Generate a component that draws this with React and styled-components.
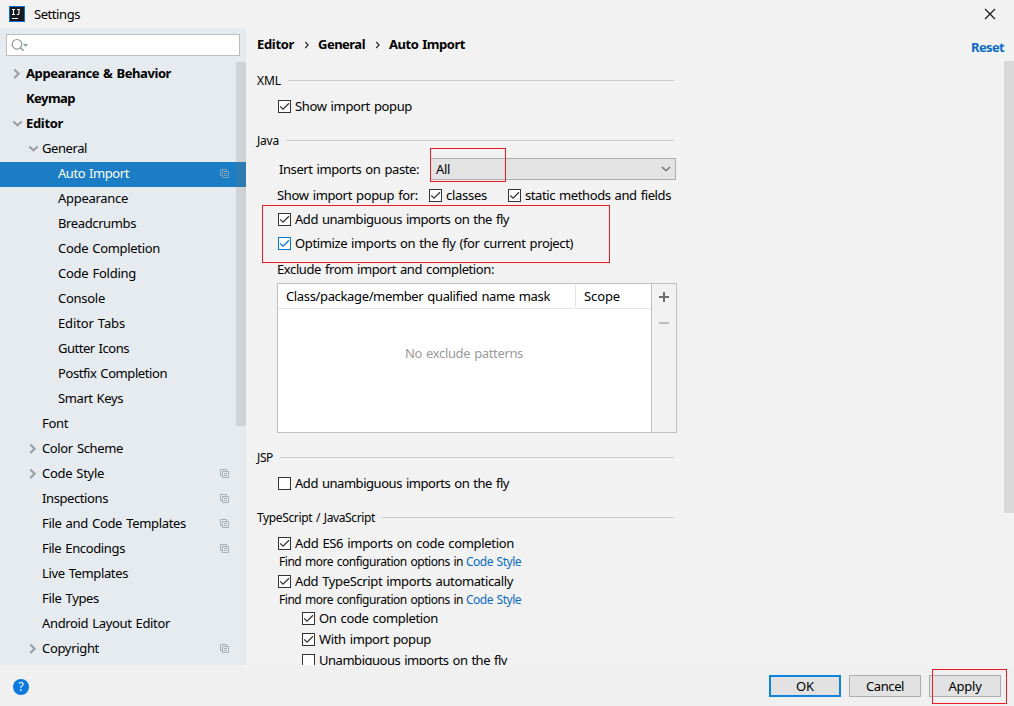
import React, { useLayoutEffect, useRef, useState } from "react";
import styled, { createGlobalStyle, css } from "styled-components";

const Global = createGlobalStyle`
  * { box-sizing: border-box; }
  html, body { margin: 0; padding: 0; overflow: hidden; }
  body {
    font-family: "Noto Sans", "Open Sans", sans-serif;
    font-size: 13px;
    color: #000;
    background: #f2f2f2;
  }
`;

/* Text fitted to a given width by adjusting its tracking. */
const Label = styled.span`
  flex: none;
  display: inline-block;
  white-space: nowrap;
  font-size: ${(p) => p.$size || 13}px;
  font-weight: ${(p) => (p.$bold ? 700 : 400)};
  color: ${(p) => p.$color || "inherit"};
  line-height: 18px;
  word-spacing: 1px;
  margin-bottom: ${(p) => p.$lift || 0}px;
`;

function Text({ w, size, bold, color, lift, children }) {
  const ref = useRef(null);
  const [spacing, setSpacing] = useState(0);
  useLayoutEffect(() => {
    const natural = ref.current.getBoundingClientRect().width;
    setSpacing((w - natural) / children.length);
  }, []);
  return (
    <Label ref={ref} $size={size} $bold={bold} $color={color} $lift={lift} style={{ letterSpacing: spacing }}>
      {children}
    </Label>
  );
}

const Window = styled.div`
  position: relative;
  width: 1014px;
  height: 706px;
  display: flex;
  flex-direction: column;
  background: #f2f2f2;
  overflow: hidden;
`;

const TitleBar = styled.header`
  height: 28px;
  flex: none;
  display: flex;
  align-items: center;
  padding: 0 18px 0 9px;
  gap: 9px;
`;

const Spacer = styled.div`
  flex: 1;
`;

const Body = styled.div`
  height: 637px;
  flex: none;
  display: flex;
`;

const Sidebar = styled.aside`
  width: 246px;
  flex: none;
  background: #e6ebef;
  display: flex;
  flex-direction: column;
`;

const Search = styled.div`
  height: 22px;
  flex: none;
  margin: 6px 6px 6px;
  background: #fff;
  border: 1px solid #bdbdbd;
  padding: 3px 0 0 4px;
  svg { display: block; }
`;

const Tree = styled.div`
  position: relative;
`;

const TreeRow = styled.div`
  height: 25px;
  display: flex;
  align-items: center;
  padding-left: ${(p) => 10 + p.$level * 16}px;
  padding-right: 16px;
  color: ${(p) => (p.$selected ? "#fff" : "#000")};
  background: ${(p) => (p.$selected ? "#1b7dc4" : "transparent")};
  padding-bottom: 1px;
`;

const ArrowSlot = styled.span`
  width: 16px;
  height: 16px;
  flex: none;
  svg { display: block; }
`;

const thumb = css`
  position: absolute;
  right: 0;
  width: 10px;
`;

const TreeThumb = styled.div`
  ${thumb}
  top: 0;
  height: 364px;
  background: rgba(115, 115, 115, 0.2);
`;

const Main = styled.main`
  position: relative;
  flex: 1;
  display: flex;
  flex-direction: column;
  overflow: hidden;
`;

const PaneThumb = styled.div`
  ${thumb}
  top: 33px;
  height: 452px;
  background: #d9d9d9;
`;

const Crumbs = styled.div`
  height: 33px;
  flex: none;
  display: flex;
  align-items: center;
  padding: 0 10px 0 11px;
`;

const CrumbArrow = styled.span`
  width: 24px;
  flex: none;
  display: flex;
  justify-content: center;
  padding-left: 2px;
`;

const ResetSlot = styled.span`
  padding-top: 6px;
`;

const Pane = styled.div`
  padding: 10px 0 0 11px;
  width: 431px;
  display: flex;
  flex-direction: column;
`;

const Heading = styled.div`
  height: 20px;
  flex: none;
  margin-top: ${(p) => p.$mt || 0}px;
  margin-right: 3px;
  display: flex;
  align-items: center;
  gap: 7px;
  &::after {
    content: "";
    flex: 1;
    height: 1px;
    margin-bottom: 1px;
    background: #cacaca;
  }
`;

const Row = styled.div`
  height: ${(p) => p.$h || 21}px;
  flex: none;
  margin-top: ${(p) => p.$mt || 0}px;
  padding-left: ${(p) => p.$indent || 21}px;
  display: flex;
  align-items: center;
`;

const Box = styled.span`
  width: 13px;
  height: 13px;
  flex: none;
  margin-right: 4px;
  border: 1px solid ${(p) => (p.$focus ? "#0078d7" : "#333")};
  color: ${(p) => (p.$focus ? "#0078d7" : "#333")};
  background: #fff;
  svg { display: block; }
`;

const Gap = styled.span`
  width: ${(p) => p.$w}px;
  flex: none;
`;

const Combo = styled.div`
  width: 246px;
  height: 22px;
  flex: none;
  display: flex;
  align-items: center;
  justify-content: space-between;
  padding: 0 4px 0 5px;
  background: #e3e3e3;
  border: 1px solid #adadad;
`;

const Table = styled.div`
  height: 150px;
  width: 400px;
  flex: none;
  margin: 3px 0 0 20px;
  display: flex;
  border: 1px solid #bfbfbf;
`;

const TableMain = styled.div`
  flex: 1;
  background: #fff;
  display: flex;
  flex-direction: column;
`;

const TableHead = styled.div`
  height: 25px;
  display: flex;
  align-items: center;
  border-bottom: 1px solid #e3e3e3;
  padding-left: 8px;
`;

const HeadName = styled.div`
  width: 290px;
  height: 22px;
  display: flex;
  align-items: center;
  border-right: 1px solid #e3e3e3;
  margin-right: 8px;
`;

const TableEmpty = styled.div`
  padding-top: 35px;
  padding-left: 127px;
`;

const TableTools = styled.div`
  width: 25px;
  border-left: 1px solid #bfbfbf;
  background: #f2f2f2;
  svg { display: block; }
`;

const Footer = styled.footer`
  flex: 1;
  display: flex;
  align-items: flex-start;
  padding: 10px 13px 0 13px;
  gap: 8px;
  background: #f0f0f0;
`;

const HelpSlot = styled.span`
  padding-top: 4px;
  svg { display: block; }
`;

const Button = styled.button`
  width: 72px;
  height: 22px;
  padding: 0;
  display: flex;
  align-items: center;
  justify-content: center;
  font-family: inherit;
  color: #000;
  background: #e2e2e2;
  border: ${(p) => (p.$primary ? "2px solid #0d83dc" : "1px solid #adadad")};
  border-radius: 0;
`;

const Mark = styled.div`
  position: absolute;
  left: ${(p) => p.$x}px;
  top: ${(p) => p.$y}px;
  width: ${(p) => p.$w}px;
  height: ${(p) => p.$h}px;
  border: 1px solid #ed1c24;
  pointer-events: none;
`;

const Logo = () => (
  <svg width="16" height="16" viewBox="0 0 16 16">
    <rect width="16" height="16" fill="#0a6fd6" />
    <rect x="1" y="1" width="14" height="14" fill="#16191d" />
    <path d="M3 3.5h3M4.5 3.5v5M3 8.5h3M8 3.5h3M10 3.5V7.2Q10 8.5 8.8 8.5H7.8" stroke="#fff" strokeWidth="1.1" fill="none" />
    <rect x="3" y="12" width="6" height="1" fill="#fff" />
  </svg>
);

const CloseIcon = () => (
  <svg width="12" height="12" viewBox="0 0 12 12">
    <path d="M1 1l10 10M11 1L1 11" stroke="#111" strokeWidth="1.1" />
  </svg>
);

const SearchIcon = () => (
  <svg width="20" height="15" viewBox="0 0 20 15">
    <circle cx="6" cy="6.3" r="4.8" stroke="#8b979f" strokeWidth="1.2" fill="none" />
    <path d="M9.5 9.8l3 3" stroke="#8b979f" strokeWidth="1.6" />
    <path d="M12 6h5l-2.5 2.7z" fill="#8b979f" />
  </svg>
);

const Arrow = ({ open }) => (
  <svg width="16" height="16" viewBox="0 0 16 16">
    <path d={open ? "M3.3 5.4L7.5 9.3l4.2-3.9" : "M4.4 3.5L8.6 7.7l-4.2 4.2"} stroke="#9a9ea2" strokeWidth="2.1" fill="none" />
  </svg>
);

const CopyIcon = ({ color }) => (
  <svg width="10" height="10" viewBox="0 0 10 10" fill="none" stroke={color}>
    <path d="M2 6.5H.5v-6h6V2M2.5 2.5h6v6h-6zM4 4.5h3M4 6.5h3" />
  </svg>
);

const CheckIcon = () => (
  <svg width="11" height="11" viewBox="0 0 11 11">
    <path d="M1.2 5.4l2.8 2.8 6-6" stroke="currentColor" strokeWidth="1.3" fill="none" />
  </svg>
);

const Check = ({ on, focus, w, children }) => (
  <>
    <Box $focus={focus}>{on && <CheckIcon />}</Box>
    <Text w={w} lift={1}>{children}</Text>
  </>
);

const TREE = [
  { t: "Appearance & Behavior", w: 145, level: 0, bold: true, arrow: "closed" },
  { t: "Keymap", w: 49, level: 0, bold: true },
  { t: "Editor", w: 37, level: 0, bold: true, arrow: "open" },
  { t: "General", w: 45, level: 1, arrow: "open" },
  { t: "Auto Import", w: 71, level: 2, selected: true, copy: true },
  { t: "Appearance", w: 70, level: 2 },
  { t: "Breadcrumbs", w: 78, level: 2 },
  { t: "Code Completion", w: 102, level: 2 },
  { t: "Code Folding", w: 78, level: 2 },
  { t: "Console", w: 47, level: 2 },
  { t: "Editor Tabs", w: 67, level: 2 },
  { t: "Gutter Icons", w: 71, level: 2 },
  { t: "Postfix Completion", w: 109, level: 2 },
  { t: "Smart Keys", w: 65, level: 2 },
  { t: "Font", w: 26, level: 1 },
  { t: "Color Scheme", w: 81, level: 1, arrow: "closed" },
  { t: "Code Style", w: 62, level: 1, arrow: "closed", copy: true },
  { t: "Inspections", w: 66, level: 1, copy: true },
  { t: "File and Code Templates", w: 144, level: 1, copy: true },
  { t: "File Encodings", w: 83, level: 1, copy: true },
  { t: "Live Templates", w: 86, level: 1 },
  { t: "File Types", w: 57, level: 1 },
  { t: "Android Layout Editor", w: 128, level: 1 },
  { t: "Copyright", w: 57, level: 1, arrow: "closed", copy: true },
];

const Chevron = () => (
  <CrumbArrow>
    <svg width="6" height="8" viewBox="0 0 6 8">
      <path d="M1.3 1l2.8 3-2.8 3" stroke="#222" strokeWidth="1.1" fill="none" />
    </svg>
  </CrumbArrow>
);

const MoreOptions = () => (
  <Row $h={16} $indent={22}>
    <Text w={184} size={12}>Find more configuration options in</Text>
    <Gap $w={3} />
    <Text w={55} size={12} color="#0a6cc4">Code Style</Text>
  </Row>
);

export default function App() {
  return (
    <Window>
      <Global />
      <TitleBar>
        <Logo />
        <Text w={46}>Settings</Text>
        <Spacer />
        <CloseIcon />
      </TitleBar>
      <Body>
        <Sidebar>
          <Search><SearchIcon /></Search>
          <Tree>
            {TREE.map((n) => (
              <TreeRow key={n.t} $level={n.level} $selected={n.selected}>
                <ArrowSlot>{n.arrow && <Arrow open={n.arrow === "open"} />}</ArrowSlot>
                <Text w={n.w} bold={n.bold} lift={2}>{n.t}</Text>
                <Spacer />
                {n.copy && <CopyIcon color={n.selected ? "#7fa3bf" : "#a3b0b9"} />}
              </TreeRow>
            ))}
            <TreeThumb />
          </Tree>
        </Sidebar>
        <Main>
          <Crumbs>
            <Text w={37} bold lift={1}>Editor</Text>
            <Chevron />
            <Text w={47} bold lift={1}>General</Text>
            <Chevron />
            <Text w={76} bold lift={1}>Auto Import</Text>
            <Spacer />
            <ResetSlot><Text w={33} bold lift={2} color="#0a6cc4">Reset</Text></ResetSlot>
          </Crumbs>
          <Pane>
            <Heading><Text w={24} size={12}>XML</Text></Heading>
            <Row $mt={5}><Check on w={117}>Show import popup</Check></Row>

            <Heading $mt={14}><Text w={22} size={12}>Java</Text></Heading>
            <Row $mt={7} $h={22} $indent={22}>
              <Text w={140} lift={1}>Insert imports on paste:</Text>
              <Gap $w={11} />
              <Combo>
                <Text w={14}>All</Text>
                <svg width="10" height="6" viewBox="0 0 10 6">
                  <path d="M1 1l4 3.6L9 1" stroke="#666" strokeWidth="1.2" fill="none" />
                </svg>
              </Combo>
            </Row>
            <Row $mt={5} $indent={20}>
              <Text w={141} lift={1}>Show import popup for:</Text>
              <Gap $w={11} />
              <Check on w={41}>classes</Check>
              <Gap $w={21} />
              <Check on w={146}>static methods and fields</Check>
            </Row>
            <Row $mt={3}><Check on w={214}>Add unambiguous imports on the fly</Check></Row>
            <Row $mt={3}><Check on focus w={278}>Optimize imports on the fly (for current project)</Check></Row>
            <Row $mt={6} $h={20} $indent={20}>
              <Text w={217} lift={2}>Exclude from import and completion:</Text>
            </Row>
            <Table>
              <TableMain>
                <TableHead>
                  <HeadName><Text w={264}>Class/package/member qualified name mask</Text></HeadName>
                  <Text w={36}>Scope</Text>
                </TableHead>
                <TableEmpty><Text w={118} color="#9a9a9a">No exclude patterns</Text></TableEmpty>
              </TableMain>
              <TableTools>
                <svg width="24" height="50" viewBox="0 0 24 50">
                  <path d="M7 13h10M12 8v10" stroke="#6e6e6e" strokeWidth="2" />
                  <path d="M7 39h10" stroke="#bcbcbc" strokeWidth="2" />
                </svg>
              </TableTools>
            </Table>

            <Heading $mt={15}><Text w={16} size={12}>JSP</Text></Heading>
            <Row $mt={5}><Check w={214}>Add unambiguous imports on the fly</Check></Row>

            <Heading $mt={14}><Text w={118} size={12}>TypeScript / JavaScript</Text></Heading>
            <Row $mt={5}><Check on w={219}>Add ES6 imports on code completion</Check></Row>
            <MoreOptions />
            <Row $mt={1}><Check on w={218}>Add TypeScript imports automatically</Check></Row>
            <MoreOptions />
            <Row $indent={45}><Check on w={119}>On code completion</Check></Row>
            <Row $indent={45}><Check on w={112}>With import popup</Check></Row>
            <Row $indent={45}><Check w={188}>Unambiguous imports on the fly</Check></Row>
          </Pane>
          <PaneThumb />
        </Main>
      </Body>
      <Footer>
        <HelpSlot>
          <svg width="16" height="16" viewBox="0 0 16 16">
            <circle cx="8" cy="8" r="8" fill="#0a78dc" />
            <text x="8" y="12.4" textAnchor="middle" fontSize="12" fill="#fff">?</text>
          </svg>
        </HelpSlot>
        <Spacer />
        <Button $primary><Text w={18}>OK</Text></Button>
        <Button><Text w={38}>Cancel</Text></Button>
        <Button><Text w={33}>Apply</Text></Button>
      </Footer>
      <Mark $x={430} $y={148} $w={76} $h={34} />
      <Mark $x={262} $y={205} $w={348} $h={58} />
      <Mark $x={932} $y={669} $w={75} $h={35} />
    </Window>
  );
}
